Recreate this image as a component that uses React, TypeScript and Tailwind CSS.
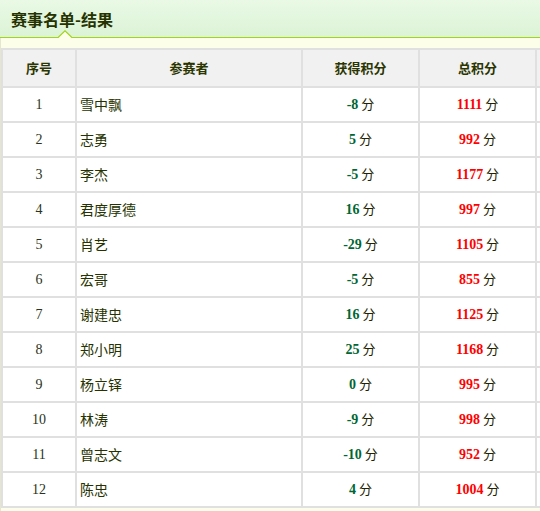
import React from "react";

const rows: [number, string, number, number][] = [
  [1, "雪中飘", -8, 1111],
  [2, "志勇", 5, 992],
  [3, "李杰", -5, 1177],
  [4, "君度厚德", 16, 997],
  [5, "肖艺", -29, 1105],
  [6, "宏哥", -5, 855],
  [7, "谢建忠", 16, 1125],
  [8, "郑小明", 25, 1168],
  [9, "杨立铎", 0, 995],
  [10, "林涛", -9, 998],
  [11, "曾志文", -10, 952],
  [12, "陈忠", 4, 1004],
];

const cjk = "font-['Noto_Sans_CJK_SC','Noto_Sans',sans-serif]";
const serif = "font-['Liberation_Serif','Noto_Sans_CJK_SC',serif]";

export default function App() {
  return (
    <div className="w-[540px] h-[511px] overflow-hidden bg-[#fdfee9]">
      <div className="relative h-[38px] bg-gradient-to-b from-[#e9f9e5] to-[#dcf3d6] border-b border-[#a3d41c]">
        <div className={`pl-[11px] pt-[8px] text-[16px] leading-[22px] font-bold text-[#263300] ${cjk}`}>
          赛事名单-结果
        </div>
        <svg
          className="absolute left-[58px] bottom-[-1px]"
          width="14"
          height="8"
          viewBox="0 0 14 8"
        >
          <polygon points="0,8 7,1 14,8" fill="#fdfee9" />
          <polyline points="0,7.5 7,0.8 14,7.5" fill="none" stroke="#a3d41c" strokeWidth="1.2" />
        </svg>
      </div>
      <div className="pt-[10px] border-l border-[#e6e6d0] h-full">
        <table className="border-collapse w-[620px] table-fixed">
          <colgroup>
            <col className="w-[74px]" />
            <col className="w-[226px]" />
            <col className="w-[117px]" />
            <col className="w-[117px]" />
            <col className="w-[86px]" />
          </colgroup>
          <thead>
            <tr className="h-[38px] bg-[#f1f1f1]">
              {["序号", "参赛者", "获得积分", "总积分", ""].map((h, i) => (
                <th
                  key={i}
                  className={`border-2 border-[#e0e0e0] text-center text-[13px] font-bold text-[#2a3500] ${cjk}`}
                >
                  {h}
                </th>
              ))}
            </tr>
          </thead>
          <tbody>
            {rows.map(([n, name, pts, total]) => (
              <tr key={n} className="h-[35px] bg-white">
                <td className={`border-2 border-[#e0e0e0] text-center text-[14px] text-[#2b3320] ${serif}`}>
                  {n}
                </td>
                <td className={`border-2 border-[#e0e0e0] pl-[3px] text-[14px] text-[#263300] ${cjk}`}>
                  {name}
                </td>
                <td className="border-2 border-[#e0e0e0] text-center text-[13px]">
                  <span className={`text-[14px] font-bold text-[#006633] ${serif}`}>{pts}</span>
                  <span className={`text-[#222200] ${cjk}`}> 分</span>
                </td>
                <td className="border-2 border-[#e0e0e0] text-center text-[13px]">
                  <span className={`text-[14px] font-bold text-[#ff0000] ${serif}`}>{total}</span>
                  <span className={`text-[#222200] ${cjk}`}> 分</span>
                </td>
                <td className="border-2 border-[#e0e0e0]"></td>
              </tr>
            ))}
          </tbody>
        </table>
      </div>
    </div>
  );
}
